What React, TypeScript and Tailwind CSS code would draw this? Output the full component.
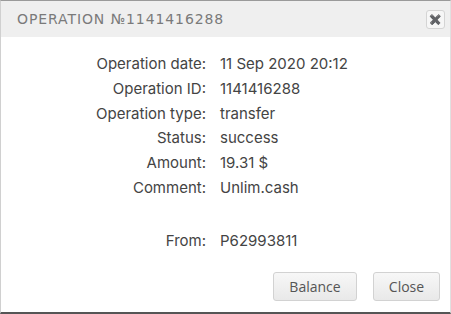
const rows: [string, string][] = [
  ['Operation date:', '11 Sep 2020 20:12'],
  ['Operation ID:', '1141416288'],
  ['Operation type:', 'transfer'],
  ['Status:', 'success'],
  ['Amount:', '19.31 $'],
  ['Comment:', 'Unlim.cash'],
]

export default function App() {
  return (
    <div className="w-[451px] h-[314px] bg-white border-t border-t-[#9a9a9a] border-l border-l-[#d0d0d0] border-r border-r-[#e0e0e0] border-b-2 border-b-[#555] flex flex-col overflow-hidden">
      {/* Header */}
      <div className="h-[36px] shrink-0 bg-[#efefef] flex items-center justify-between pl-[16px] pr-[5px]">
        <span className="text-[14px] tracking-[0.9px] text-[#7a7a7a] uppercase" style={{ fontFamily: '"DejaVu Sans", sans-serif' }}>
          Operation №1141416288
        </span>
        <button className="w-[19px] h-[19px] border border-[#d4d4d4] rounded-[3px] bg-[#f6f6f6] flex items-center justify-center text-[#9a9a9a] text-[10px] leading-none">
          ✖
        </button>
      </div>

      {/* Details */}
      <div className="flex-1 pt-[15px] text-[15px] text-[#444]" style={{ fontFamily: 'Inter, sans-serif' }}>
        <div className="grid grid-cols-[205px_1fr] gap-x-[14px]">
          {rows.map(([k, v]) => (
            <div key={k} className="contents">
              <div className="text-right h-[24.8px] leading-[24.8px]">{k}</div>
              <div className="h-[24.8px] leading-[24.8px]">{v}</div>
            </div>
          ))}
          <div className="h-[28px]" />
          <div className="h-[28px]" />
          <div className="text-right h-[24.8px] leading-[24.8px]">From:</div>
          <div className="h-[24.8px] leading-[24.8px]">P62993811</div>
        </div>
      </div>

      {/* Footer */}
      <div className="flex justify-end gap-[16px] pr-[10px] pb-[11px]" style={{ fontFamily: '"Open Sans", sans-serif' }}>
        <button className="w-[84px] h-[29px] border border-[#d2d2d2] rounded-[3px] bg-gradient-to-b from-[#f7f7f7] to-[#e9e9e9] text-[14px] text-[#555]">
          Balance
        </button>
        <button className="w-[67px] h-[29px] border border-[#d2d2d2] rounded-[3px] bg-gradient-to-b from-[#f7f7f7] to-[#e9e9e9] text-[14px] text-[#555]">
          Close
        </button>
      </div>
    </div>
  )
}
